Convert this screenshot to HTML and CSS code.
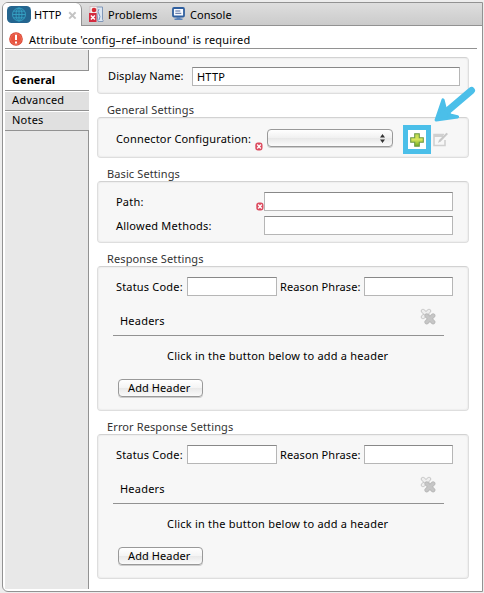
FILE: index.html
```html
<!DOCTYPE html>
<html lang="en">
<head>
<meta charset="utf-8">
<title>HTTP</title>
<link rel="stylesheet" href="styles.css">
</head>
<body>
<svg class="defs" width="0" height="0">
  <symbol id="cross" viewBox="0 0 8 9"><rect x=".3" y=".6" width="7.2" height="7.8" rx="2.6" fill="#dc4a5e"/><path d="M2.2 2.6l3.6 3.8M5.8 2.6L2.2 6.4" stroke="#fff" stroke-width="1.4"/></symbol>
  <symbol id="clear" viewBox="0 0 16 17"><path d="M3 3l6 6M9 3L3 9" stroke="#c8c8c8" stroke-width="4.4" stroke-linecap="round"/><path d="M3 3l6 6M9 3L3 9" stroke="#eee" stroke-width="2.6" stroke-linecap="round"/><path d="M6.7 7.7l6.4 6.4M13.1 7.7l-6.4 6.4" stroke="#bababa" stroke-width="4.6" stroke-linecap="round"/><path d="M6.7 7.7l6.4 6.4M13.1 7.7l-6.4 6.4" stroke="#c6c6c6" stroke-width="2.8" stroke-linecap="round"/></symbol>
</svg>
<main class="window">
  <nav class="tabs">
    <div class="tab active">
      <svg class="globe" width="24" height="17" viewBox="0 0 24 17"><rect width="24" height="17" rx="4.5" fill="#24658f"/><g fill="none" stroke="#36a3c4" stroke-width=".9"><circle cx="12" cy="8.5" r="6.5"/><ellipse cx="12" cy="8.5" rx="3" ry="6.5"/><path d="M12 2v13M5.5 8.5h13M6.5 5.2h11M6.5 11.8h11"/></g></svg>
      <span class="t-http">HTTP</span>
      <svg class="close" width="9" height="9" viewBox="0 0 9 9"><path d="M1.2 1.2l6.4 6.4M7.6 1.2L1.2 7.6" stroke="#c4c4c4" stroke-width="2"/></svg>
    </div>
    <div class="tab problems">
      <svg width="15" height="16" viewBox="0 0 15 16"><path d="M7 1h6.5v12.5q1 1 .5 2H9z" fill="#dce6f2" stroke="#8097b8"/><path d="M10 3q-2 3 0 5t0 6" fill="none" stroke="#7897c1"/><rect x="1" y=".5" width="7" height="7" fill="#f6eeee" stroke="#c8b4b8" stroke-width=".7"/><circle cx="5" cy="4" r="2.3" fill="#d62c36"/><rect y="7" width="7.5" height="9" fill="#d32b40"/><path d="M1.9 9.5l4 4M5.9 9.5l-4 4" stroke="#fff" stroke-width="1.5"/></svg>
      <span>Problems</span>
    </div>
    <div class="tab console">
      <svg width="13" height="14" viewBox="0 0 13 14"><rect x="1" y="1" width="11" height="8.5" rx="1" fill="#f8faff" stroke="#2f5f9f" stroke-width="1.8"/><path d="M3.3 4h5M3.3 6.3h6" stroke="#49659b"/><path d="M4.5 10h4v1.5h2V13h-8v-1.5h2z" fill="#5b82b8"/></svg>
      <span>Console</span>
    </div>
  </nav>
  <div class="message">
    <svg width="14" height="14" viewBox="0 0 14 14"><circle cx="7" cy="7" r="6.8" fill="#d9402d"/><circle cx="7" cy="7" r="5.5" fill="#e8533e" stroke="#f58c78" stroke-width=".6"/><path d="M7 2.8v5.3M7 9.5v2" stroke="#fff" stroke-width="2"/></svg>
    <span>Attribute 'config–ref–inbound' is required</span>
  </div>
  <div class="body">
    <aside class="side">
      <div class="side-top"></div>
      <div class="item selected"><span>General</span></div>
      <div class="item"><span>Advanced</span></div>
      <div class="item"><span>Notes</span></div>
      <div class="side-rest"></div>
    </aside>
    <section class="form">
      <div class="panel name-panel">
        <span class="label">Display Name:</span><div class="input">HTTP</div>
      </div>
      <h2 class="h-general"><span>General Settings</span></h2>
      <div class="panel connector">
        <span class="label">Connector Configuration:</span>
        <svg class="err" width="8" height="9"><use href="#cross"/></svg>
        <div class="select"><svg width="5" height="9" viewBox="0 0 5 9"><path d="M0 3.5L2.5 0 5 3.5zM0 5.5h5L2.5 9z" fill="#333"/></svg></div>
        <div class="add">
          <svg width="14" height="14" viewBox="0 0 14 14"><defs><linearGradient id="green" x2="0" y2="1"><stop stop-color="#b8d94c"/><stop offset=".45" stop-color="#dbe85e"/><stop offset="1" stop-color="#6cab1e"/></linearGradient></defs><path d="M4.7.7h4.6v4h4v4.6h-4v4H4.7v-4h-4V4.7h4z" fill="url(#green)" stroke="#6f9a48" stroke-width="1.1"/></svg>
          <svg class="arrow" width="42" height="38" viewBox="0 0 42 38"><path d="M37.5 4.5L11 27" fill="none" stroke="#4bbfe9" stroke-linecap="round" stroke-width="7"/><path d="M2.2 34L9 14 11 22 16 29 23.5 30.8z" fill="#4bbfe9" stroke="#4bbfe9" stroke-width="3.2" stroke-linejoin="round"/></svg>
        </div>
        <svg class="edit" width="16" height="15" viewBox="0 0 16 15"><path d="M11 2.5H1v11h11V8" fill="none" stroke="#d0d0d0" stroke-width="1.6"/><path d="M1 4h9" stroke="#d0d0d0" stroke-width="2"/><path d="M5 11l1-3L13.5.8 15 2 8 9.3z" fill="#c8c8c8"/></svg>
      </div>
      <h2><span>Basic Settings</span></h2>
      <div class="panel basic">
        <div class="row"><span class="label">Path:</span><svg class="err" width="8" height="9"><use href="#cross"/></svg><div class="input"></div></div>
        <div class="row"><span class="label">Allowed Methods:</span><div class="input"></div></div>
      </div>
      <h2><span>Response Settings</span></h2>
      <div class="panel response">
        <div class="codes"><span class="label t-status">Status Code:</span><div class="input status"></div><span class="label t-reason">Reason Phrase:</span><div class="input reason"></div></div>
        <div class="headers"><span class="t-headers">Headers</span><svg width="16" height="17"><use href="#clear"/></svg></div>
        <p class="hint"><span>Click in the button below to add a header</span></p>
        <div class="button"><span>Add Header</span></div>
      </div>
      <h2><span>Error Response Settings</span></h2>
      <div class="panel response">
        <div class="codes"><span class="label t-status">Status Code:</span><div class="input status"></div><span class="label t-reason">Reason Phrase:</span><div class="input reason"></div></div>
        <div class="headers"><span class="t-headers">Headers</span><svg width="16" height="17"><use href="#clear"/></svg></div>
        <p class="hint"><span>Click in the button below to add a header</span></p>
        <div class="button"><span>Add Header</span></div>
      </div>
    </section>
  </div>
</main>
</body>
</html>
```
FILE: styles.css
```css
* { box-sizing: border-box; }
body { margin: 0; padding: 2px 1px 1px 2px; height: 593px; background: #ededed; overflow: hidden; font: 11px/16px "Noto Sans", "Open Sans", sans-serif; color: #000; letter-spacing: .22px; }
svg { display: block; flex: none; }
.defs { position: absolute; }
span { white-space: nowrap; }
.window { height: 590px; border: 1px solid #929292; border-radius: 6px 0 0 6px; background: #fff; overflow: hidden; }
.tabs { display: flex; height: 23px; background: linear-gradient(#dedede, #cbcbcb); border-bottom: 1px solid #929292; }
.tab { display: flex; align-items: center; height: 22px; letter-spacing: .05px; }
.tab.active { width: 79px; height: 23px; padding-left: 4px; background: #fff; border-right: 1px solid #929292; border-radius: 0 6px 0 0; }
.globe { margin-right: 3px; }
.close { margin: 1px 4px 0 auto; }
.problems { padding-left: 7px; width: 90px; gap: 4px; }
.console { gap: 5px; }
.tab span { padding-top: 1px; }
.message { display: flex; align-items: center; height: 23px; margin: 0 5px 0 2px; padding: 4px 0 0 4px; gap: 6px; border-bottom: 1px solid #929292; }
.message span { padding-top: 1px; }
.body { display: flex; margin: 1px 0 0 2px; height: 539px; }
.side { display: flex; flex-direction: column; width: 84px; }
.side-top { height: 21px; background: #e8e8e8; border-right: 1px solid #929292; border-bottom: 1px solid #929292; }
.item { height: 20px; padding-left: 7px; background: #e0e0e0; border-top: 1px solid #fff; border-bottom: 1px solid #929292; }
.selected { background: #fff; font-weight: 700; letter-spacing: .05px; }
.side-rest { flex: 1; background: #e8e8e8; border-right: 1px solid #929292; }
.form { width: 372px; margin-left: 8px; padding-top: 7px; }
.panel { background: #f7f7f7; border: 1px solid #dedede; border-top-color: #d2d2d2; border-radius: 4px; box-shadow: inset 0 0 1px 1px #eee; }
.input { height: 19px; background: #fff; border: 1px solid #b6b6b6; border-top-color: #888; }
h2 { height: 23px; margin: 0; padding: 8px 0 0 10px; font-size: 11px; font-weight: 400; line-height: 16px; letter-spacing: .11px; color: #333; }
.name-panel { display: flex; height: 37px; padding: 9px 8px 0 10px; }
.name-panel .label { width: 84px; padding-top: 1px; letter-spacing: .1px; }
.name-panel .input { width: 268px; padding-left: 4px; line-height: 18px; }
.connector { display: flex; height: 41px; padding-left: 18px; }
.connector .label { width: 139px; padding-top: 13px; letter-spacing: .17px; }
.connector .err { margin: 24px 4px 0 0; }
.select { display: flex; justify-content: flex-end; align-items: center; width: 126px; height: 18px; margin-top: 11px; padding-right: 7px; border: 1px solid #999; border-radius: 4px; background: linear-gradient(#fff, #f0f0f0 50%, #e8e8e8 52%, #fbfbfb); box-shadow: 0 1px 0 #ccc; }
.add { position: relative; display: flex; align-items: center; justify-content: center; width: 28px; height: 29px; margin: 7px 2px 0 10px; border: 5px solid #4bbfe9; background: #fff; }
.arrow { position: absolute; left: 26px; top: -44px; }
.edit { margin-top: 14px; }
.basic { height: 62px; padding: 10px 15px 0 18px; }
.row { display: flex; height: 24px; }
.row .label { flex: 1; padding-top: 2px; }
.row .input { width: 189px; }
.row .err { margin: 10px 0 0; }
.response { height: 145px; padding: 10px 15px 0 18px; }
.codes { display: flex; height: 19px; letter-spacing: .18px; }
.codes .label { padding-top: 2px; }
.status { width: 90px; margin-right: 3px; }
.codes .t-status { width: 71px; }
.codes .t-reason { width: 84px; letter-spacing: .1px; }
.reason { width: 89px; }
.headers { display: flex; justify-content: space-between; height: 40px; width: 331px; margin-left: -3px; padding: 12px 8px 0 7px; border-bottom: 1px solid #929292; }
.headers .t-headers { padding-top: 5px; }
.hint { margin: 12px 0 15px 51px; height: 16px; }
.button { width: 85px; height: 18px; margin-left: 2px; padding-left: 9px; line-height: 16px; letter-spacing: .1px; border: 1px solid #999; border-radius: 4px; background: linear-gradient(#fff, #f4f4f4 50%, #e9e9e9 52%, #fafafa); box-shadow: 0 1px 0 #ccc; }
```
